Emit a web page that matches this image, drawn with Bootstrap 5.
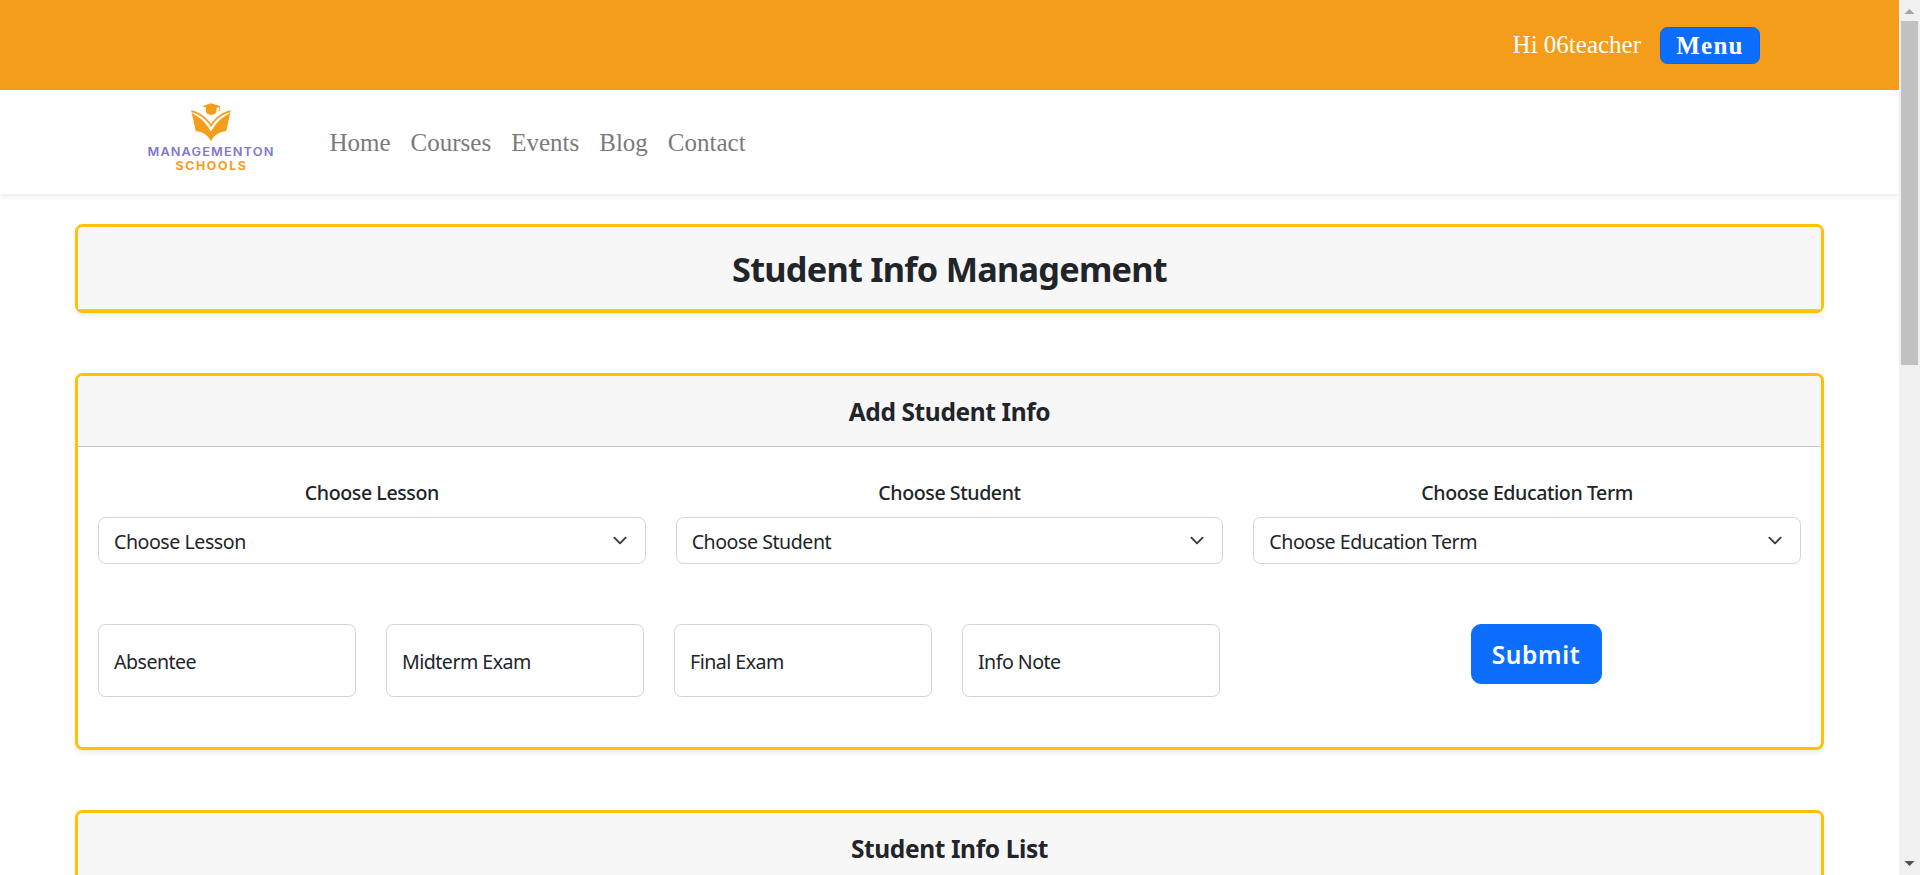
<!DOCTYPE html>
<html lang="en">
<head>
<meta charset="utf-8">
<meta name="viewport" content="width=device-width, initial-scale=1">
<title>Student Info Management</title>
<link href="https://cdn.jsdelivr.net/npm/bootstrap@5.3.0/dist/css/bootstrap.min.css" rel="stylesheet">
<style>
  html { font-size: 20px; }
  body { font-family: "Noto Sans", sans-serif; --bs-border-radius: 7.5px; }
  .serif { font-family: "Liberation Serif", serif; font-size: 25px; }
  .top-bar { height: 90px; background: #f49d1a; padding-right: 139px; }
  .user-greeting { margin-right: 19px; }
  .menu-btn { height: 37px; width: 100px; padding: 0; line-height: 35px; font-family: "Liberation Serif", serif;
    font-size: 25px; font-weight: 700; letter-spacing: 1.25px; border-color: #0b63e8; border-radius: 7.5px; }
  .site-nav { height: 104px; padding: 0 0 0 130px; box-shadow: 0 2.5px 5px rgba(0,0,0,.075); }
  .site-nav .nav-link { color: #7a7a7a; padding: 0 10px; line-height: 37px; }
  .site-logo { width: 160px; height: 90px; margin-right: 29.5px; }
  .page-cards { margin: 30px 75px 0; display: grid; row-gap: 60px; }
  .info-card { border: 3px solid #ffc107; border-radius: 7.5px; box-shadow: 0 2.5px 5px rgba(0,0,0,.075); }
  .info-card .card-header { padding: 21px 20px 19px; background: #f7f7f7; border-bottom: 1px solid #c8c8c8; border-radius: 4.5px 4.5px 0 0; }
  .page-title { font-size: 34.3px; line-height: 42px; letter-spacing: -.77px; }
  .card-heading { font-size: 24.5px; line-height: 30px; letter-spacing: -.38px; }
  .form-area { padding: 20px 20px 50px; }
  .pick-label { font-size: 19.6px; line-height: 30px; font-weight: 500; letter-spacing: -.43px; padding-top: 1px; margin-bottom: 9px; }
  .form-select { font-size: 19.6px; line-height: 30px; letter-spacing: -.46px; height: 47px; padding: 9px 45px 6px 15px; border-color: #d0d4da;
    background-size: 20px 15px; background-position: right 15px center; }
  .score-row { display: grid; grid-template-columns: repeat(4, 258px) 1fr; column-gap: 30px; margin-top: 60px; }
  .score-box { height: 73px; font-size: 19.6px; line-height: 30px; letter-spacing: -.52px; padding: 2px 15px 0; border-color: #d0d4da; }
  .score-box::placeholder { color: #212529; }
  .submit-cell { padding-left: 21px; }
  .submit-btn { width: 131px; height: 60px; padding: 2px 0 0; font-size: 24.5px; font-weight: 600; letter-spacing: .6px; border-radius: 10px; }
  .scroll-rail { width: 21px; background: #f0f0f0; }
  .scroll-thumb { width: 17px; height: 344px; background: #c1c1c1; }
</style>
</head>
<body>
<div class="d-flex vh-100 overflow-hidden">
  <div class="flex-grow-1 overflow-hidden">
    <header class="top-bar d-flex align-items-center justify-content-end text-white">
      <span class="serif user-greeting">Hi 06teacher</span>
      <button class="btn btn-primary menu-btn" type="button">Menu</button>
    </header>
    <nav class="site-nav navbar justify-content-start bg-white">
      <svg class="site-logo align-self-start" viewBox="0 0 160 90" role="img" aria-label="Managementon Schools">
        <g fill="#f49d1a">
          <path d="M72 16.200 81 13.200l9.700 3-1 .5v3.300l.5 1h-1.700l.5-1v-2.800l-2.500.8v3c0 2.200-2.600 3.900-5.300 3.900s-5.300-1.700-5.300-3.900v-3.600z"/>
          <path d="M61.200 20.200C70 22 77 27.500 81 34.200 85 27.500 92 22 100.800 20.200L96.200 41.300c-6.300.2-12 3.600-15.200 10-3.200-6.400-8.900-9.800-15.200-10z"/>
        </g>
        <path d="M61 22.300c2 .3 3.500.8 4 1C73 26.500 78 31.500 81 37.600 84 31.500 89 26.500 97 23.300c.500-.2 2-.7 4-1-1 .7-2.500 1.400-3.500 2.100C90 28.500 85 34.500 81 41.500 77 34.500 72 28.500 64.500 24.400c-1-.7-2.500-1.400-3.500-2.100z" fill="#fff"/>
        <text x="17.500" y="66.200" textLength="127" lengthAdjust="spacingAndGlyphs" letter-spacing="1" font-family="Inter, sans-serif" font-size="11.400" font-weight="600" fill="#8177ca">MANAGEMENTON</text>
        <text x="45.500" y="79.700" textLength="72" lengthAdjust="spacingAndGlyphs" letter-spacing="1.500" font-family="Inter, sans-serif" font-size="11.600" font-weight="700" fill="#f49d1a">SCHOOLS</text>
      </svg>
      <div class="nav serif">
        <a class="nav-link" href="#">Home</a>
        <a class="nav-link" href="#">Courses</a>
        <a class="nav-link" href="#">Events</a>
        <a class="nav-link" href="#">Blog</a>
        <a class="nav-link" href="#">Contact</a>
      </div>
    </nav>
    <main class="page-cards text-center">
      <section class="card info-card">
        <div class="card-header"><h1 class="page-title fw-bold m-0">Student Info Management</h1></div>
      </section>
      <section class="card info-card">
        <div class="card-header"><h2 class="card-heading fw-bold m-0">Add Student Info</h2></div>
        <form class="form-area">
          <div class="row" style="--bs-gutter-x:30px">
            <div class="col-4 mt-2">
              <label class="pick-label d-block" for="lesson">Choose Lesson</label>
              <select id="lesson" class="form-select"><option>Choose Lesson</option></select>
            </div>
            <div class="col-4 mt-2">
              <label class="pick-label d-block" for="student">Choose Student</label>
              <select id="student" class="form-select"><option>Choose Student</option></select>
            </div>
            <div class="col-4 mt-2">
              <label class="pick-label d-block" for="term">Choose Education Term</label>
              <select id="term" class="form-select"><option>Choose Education Term</option></select>
            </div>
          </div>
          <div class="score-row">
            <input class="form-control score-box" placeholder="Absentee">
            <input class="form-control score-box" placeholder="Midterm Exam">
            <input class="form-control score-box" placeholder="Final Exam">
            <input class="form-control score-box" placeholder="Info Note">
            <div class="submit-cell"><button class="btn btn-primary submit-btn" type="button">Submit</button></div>
          </div>
        </form>
      </section>
      <section class="card info-card">
        <div class="card-header"><h2 class="card-heading fw-bold m-0">Student Info List</h2></div>
      </section>
    </main>
  </div>
  <aside class="scroll-rail d-flex flex-column align-items-center justify-content-between flex-shrink-0" aria-hidden="true">
    <div class="d-flex flex-column align-items-center">
      <svg width="21" height="21"><path d="M5.500 14 10.500 9l5 5z" fill="#a3a3a3"/></svg>
      <div class="scroll-thumb"></div>
    </div>
    <svg width="21" height="21"><path d="M5.500 7h10l-5 5z" fill="#505050"/></svg>
  </aside>
</div>
<script src="https://cdn.jsdelivr.net/npm/bootstrap@5.3.0/dist/js/bootstrap.bundle.min.js"></script>
</body>
</html>
